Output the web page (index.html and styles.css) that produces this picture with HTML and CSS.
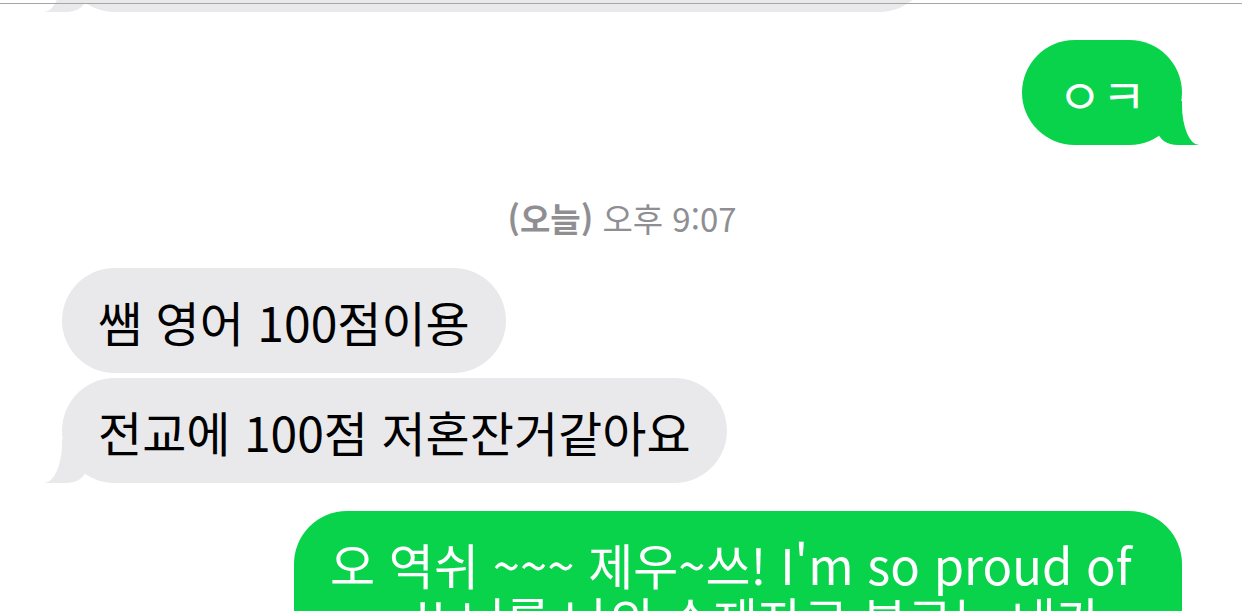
FILE: index.html
```
<!DOCTYPE html>
<html lang="ko">
<head>
  <meta charset="UTF-8">
  <meta name="viewport" content="width=device-width, initial-scale=1.0">
  <title>메시지</title>
  <link rel="stylesheet" href="styles.css">
</head>
<body>
  <div class="top-rule"></div>
  <div class="thread">
    <div class="bubble received tail first">넹 알겠습니다 쌤 내일 학원에서 뵐게요 오늘도 감사했습니당</div>
    <div class="bubble sent tail">ㅇㅋ</div>

    <p class="stamp"><b>(오늘)</b> 오후 9:07</p>

    <div class="bubble received">쌤 영어 100점이용</div>
    <div class="bubble received tail">전교에 100점 저혼잔거같아요</div>
    <div class="bubble sent long">오 역쉬 ~~~ 제우~쓰! I'm so proud of you!! 너를 나의 수제자로 부르는 내가 자랑스러워</div>
  </div>
</body>
</html>
```

FILE: styles.css
```
html, body {
  margin: 0;
  height: 100%;
  overflow: hidden;
}

body {
  background: #fff;
  font-family: "Noto Sans CJK KR", "Noto Sans", sans-serif;
  color: #000;
}

.top-rule {
  position: absolute;
  top: 3px;
  left: 0;
  right: 0;
  height: 1px;
  background: #a6a6a6;
  z-index: 5;
}

.thread {
  display: flex;
  flex-direction: column;
  padding: 0 60px 0 62px;
}

.bubble {
  position: relative;
  box-sizing: border-box;
  padding: 26px 36px 25px;
  font-size: 48px;
  line-height: 54px;
  border-radius: 53px;
  margin-bottom: 5px;
}

.received {
  align-self: flex-start;
  background: #e9e9eb;
  max-width: 870px;
}

.sent {
  align-self: flex-end;
  background: #08d34b;
  color: #fff;
  max-width: 888px;
}

.first {
  margin-top: -147px;
}

.tail {
  margin-bottom: 28px;
}

/* tails: a coloured block, then a white block with a curved corner cuts it */
.tail::before,
.tail::after {
  content: "";
  position: absolute;
  bottom: 0;
  height: 44px;
}

.received.tail::before {
  left: -18px;
  width: 42px;
  background: #e9e9eb;
  border-bottom-right-radius: 20px 14px;
  z-index: 0;
}

.received.tail::after {
  left: -26px;
  width: 26px;
  background: #fff;
  border-bottom-right-radius: 18px 40px;
  z-index: 1;
}

.sent.tail::before {
  right: -17px;
  width: 41px;
  background: #08d34b;
  border-bottom-left-radius: 20px 14px;
  z-index: 0;
}

.sent.tail::after {
  right: -25px;
  width: 25px;
  background: #fff;
  border-bottom-left-radius: 17px 40px;
  z-index: 1;
}

.stamp {
  align-self: center;
  margin: 25px 0 30px;
  font-size: 33px;
  line-height: 40px;
  color: #8e8e93;
}

.stamp b {
  font-weight: 700;
}

.long {
  font-size: 49px;
}
```
